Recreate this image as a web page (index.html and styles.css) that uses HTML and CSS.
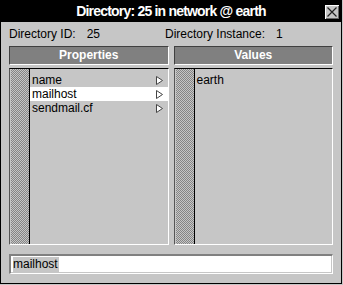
FILE: index.html
```html
<!DOCTYPE html>
<html lang="en">
<head>
    <meta charset="UTF-8">
    <title>Directory: 25 in network @ earth</title>
    <link rel="stylesheet" href="styles.css">
</head>
<body>
    <div class="window">
        <div class="titlebar">
            <span></span>
            <span class="title">Directory: 25 in network @ earth</span>
            <button class="close" title="Close">
                <svg width="14" height="14" viewBox="0 0 14 14">
                    <path d="M2.5 2.5 L11.5 11.5 M11.5 2.5 L2.5 11.5" stroke="#222" stroke-width="1.2" fill="none"/>
                </svg>
            </button>
        </div>

        <div class="content">
            <div class="info">
                <div class="info-item first">
                    <span>Directory ID:</span><span>25</span>
                </div>
                <div class="info-item">
                    <span>Directory Instance:</span><span>1</span>
                </div>
            </div>

            <div class="panes">
                <div class="pane">
                    <div class="pane-header">Properties</div>
                    <div class="list">
                        <div class="gutter"></div>
                        <div class="items">
                            <div class="item">name <svg class="arrow" width="7" height="9" viewBox="0 0 7 9"><polygon points="0.5,0.5 6.5,4.5 0.5,8.5" fill="#fff" stroke="#444" stroke-width="1"/></svg></div>
                            <div class="item selected">mailhost <svg class="arrow" width="7" height="9" viewBox="0 0 7 9"><polygon points="0.5,0.5 6.5,4.5 0.5,8.5" fill="#fff" stroke="#444" stroke-width="1"/></svg></div>
                            <div class="item">sendmail.cf <svg class="arrow" width="7" height="9" viewBox="0 0 7 9"><polygon points="0.5,0.5 6.5,4.5 0.5,8.5" fill="#fff" stroke="#444" stroke-width="1"/></svg></div>
                        </div>
                    </div>
                </div>
                <div class="pane">
                    <div class="pane-header">Values</div>
                    <div class="list">
                        <div class="gutter"></div>
                        <div class="items">
                            <div class="item">earth</div>
                        </div>
                    </div>
                </div>
            </div>

            <div class="entry">
                <span class="entry-text">mailhost</span>
            </div>
        </div>
    </div>
</body>
</html>
```

FILE: styles.css
```css
* {
    margin: 0;
    padding: 0;
    box-sizing: border-box;
}

body {
    background: #c6c6c6;
    font-family: 'Liberation Sans', Arial, sans-serif;
    font-size: 12px;
    color: #000;
}

.window {
    width: 342px;
    height: 284px;
    border: 1px solid #000;
    background: #c6c6c6;
    display: flex;
    flex-direction: column;
}

.titlebar {
    height: 21px;
    background: #000;
    color: #fff;
    display: grid;
    grid-template-columns: 1fr auto 1fr;
    align-items: center;
}

.title {
    font-weight: bold;
    font-size: 14px;
    letter-spacing: -0.8px;
    line-height: 21px;
}

.close {
    justify-self: end;
    margin-right: 2px;
    width: 14px;
    height: 14px;
    border: none;
    background: #c6c6c6;
    display: block;
    box-shadow: inset 1px 1px #fff, inset -1px -1px #666;
}

.close svg {
    display: block;
}

.content {
    flex: 1;
    padding: 5px 8px 9px;
    display: flex;
    flex-direction: column;
}

.info {
    display: flex;
    height: 14px;
    line-height: 14px;
}

.info-item {
    display: flex;
    gap: 11px;
}

.info-item.first {
    width: 156px;
}

.panes {
    margin-top: 5px;
    display: grid;
    grid-template-columns: 1fr 1fr;
    gap: 5px;
}

.pane-header {
    height: 19px;
    background: #808080;
    color: #fff;
    font-weight: bold;
    text-align: center;
    line-height: 17px;
    border-top: 1px solid #404040;
    border-left: 1px solid #404040;
    border-bottom: 1px solid #fff;
    border-right: 1px solid #fff;
}

.list {
    margin-top: 3px;
    height: 177px;
    display: flex;
    padding-left: 1px;
    border-top: 1px solid #000;
    border-left: 1px solid #555;
    border-bottom: 1px solid #fff;
    border-right: 1px solid #fff;
}

.gutter {
    width: 19px;
    border-right: 1px solid #000;
    background: repeating-conic-gradient(#858585 0 25%, #c6c6c6 0 50%) 0 0 / 2px 2px;
}

.items {
    flex: 1;
    padding-top: 4px;
}

.item {
    height: 14px;
    line-height: 14px;
    padding: 0 5px 0 2px;
    display: flex;
    justify-content: space-between;
    align-items: center;
}

.item.selected {
    background: #fff;
}

.arrow {
    display: block;
}

.entry {
    margin-top: 9px;
    height: 20px;
    background: #fff;
    border-top: 2px solid #808080;
    border-left: 2px solid #808080;
    border-bottom: 1px solid #fff;
    border-right: 1px solid #fff;
    box-shadow: inset -1px -1px #c6c6c6;
    padding: 1px 0 0 2px;
}

.entry-text {
    display: inline-block;
    background: #c6c6c6;
    line-height: 15px;
    padding-right: 1px;
}
```
